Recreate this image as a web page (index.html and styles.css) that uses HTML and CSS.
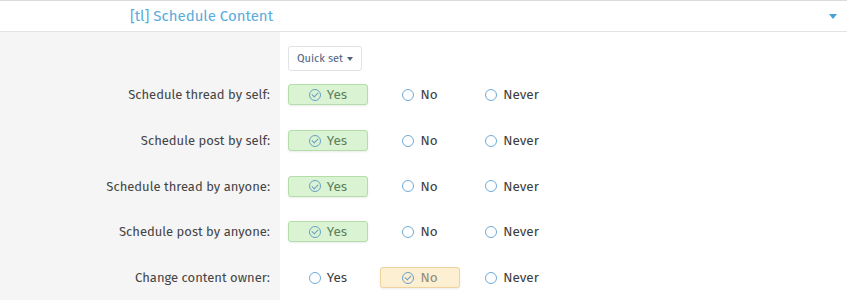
FILE: index.html
```html
<!DOCTYPE html>
<html lang="en">
<head>
    <meta charset="UTF-8">
    <title>Schedule Content permissions</title>
    <link rel="stylesheet" href="styles.css">
</head>
<body>
    <div class="block">
        <!-- Cabeçalho do grupo -->
        <div class="block-header">
            <span class="block-title">[tl] Schedule Content</span>
            <span class="block-caret"></span>
        </div>

        <div class="block-body">
            <div class="form-row">
                <div class="row-label"></div>
                <div class="row-input">
                    <button class="quick-set">Quick set <span class="mini-caret"></span></button>
                </div>
            </div>

            <div class="form-row">
                <div class="row-label">Schedule thread by self:</div>
                <div class="row-input choices">
                    <label class="choice allow"><span class="icon-check"></span>Yes</label>
                    <label class="choice"><span class="radio"></span>No</label>
                    <label class="choice"><span class="radio"></span>Never</label>
                </div>
            </div>

            <div class="form-row">
                <div class="row-label">Schedule post by self:</div>
                <div class="row-input choices">
                    <label class="choice allow"><span class="icon-check"></span>Yes</label>
                    <label class="choice"><span class="radio"></span>No</label>
                    <label class="choice"><span class="radio"></span>Never</label>
                </div>
            </div>

            <div class="form-row">
                <div class="row-label">Schedule thread by anyone:</div>
                <div class="row-input choices">
                    <label class="choice allow"><span class="icon-check"></span>Yes</label>
                    <label class="choice"><span class="radio"></span>No</label>
                    <label class="choice"><span class="radio"></span>Never</label>
                </div>
            </div>

            <div class="form-row">
                <div class="row-label">Schedule post by anyone:</div>
                <div class="row-input choices">
                    <label class="choice allow"><span class="icon-check"></span>Yes</label>
                    <label class="choice"><span class="radio"></span>No</label>
                    <label class="choice"><span class="radio"></span>Never</label>
                </div>
            </div>

            <div class="form-row">
                <div class="row-label">Change content owner:</div>
                <div class="row-input choices">
                    <label class="choice"><span class="radio"></span>Yes</label>
                    <label class="choice unset"><span class="icon-check"></span>No</label>
                    <label class="choice"><span class="radio"></span>Never</label>
                </div>
            </div>
        </div>
    </div>
</body>
</html>
```

FILE: styles.css
```css
body {
    margin: 0;
    font-family: "Fira Sans", "Noto Sans", sans-serif;
    font-size: 13px;
    color: #444;
    background-color: #fff;
}

.block {
    border-top: 1px solid #dcdcdc;
}

.block-header {
    display: flex;
    align-items: center;
    height: 30px;
    padding: 0 10px 0 130px;
    border-bottom: 1px solid #e3e3e3;
}

.block-title {
    flex-grow: 1;
    font-size: 15px;
    color: #5aacdb;
}

.block-caret {
    width: 0;
    height: 0;
    border-left: 4px solid transparent;
    border-right: 4px solid transparent;
    border-top: 5px solid #47a0d6;
}

.block-body {
    background: linear-gradient(to right, #f5f5f5 280px, #fff 280px);
    padding-top: 14px;
}

.form-row {
    display: flex;
    align-items: center;
    min-height: 45.7px;
}

.form-row:first-child {
    min-height: 0;
    padding-bottom: 1px;
}

.row-label {
    width: 280px;
    text-align: right;
    padding-right: 10px;
    box-sizing: border-box;
    margin-right: 8px;
}

.quick-set {
    font-family: inherit;
    font-size: 11px;
    color: #4c6180;
    background-color: #fff;
    border: 1px solid #dfe3e8;
    border-radius: 3px;
    padding: 0 8px;
    height: 25px;
    display: flex;
    align-items: center;
    gap: 4px;
}

.mini-caret {
    display: inline-block;
    border-left: 3.5px solid transparent;
    border-right: 3.5px solid transparent;
    border-top: 4px solid #4c6180;
}

.choices {
    display: flex;
    gap: 12px;
}

.choice {
    width: 80px;
    height: 21px;
    box-sizing: border-box;
    display: flex;
    align-items: center;
    justify-content: center;
    gap: 6px;
    border: 1px solid transparent;
    border-radius: 3px;
    font-size: 13.5px;
    color: #3d3d3d;
}

.choice.allow {
    background-color: #daf3d3;
    border-color: #b3dea9;
    color: #5c7f5c;
    box-shadow: 0 1px 2px rgba(0, 0, 0, 0.08);
}

.choice.unset {
    background-color: #fdefd1;
    border-color: #efd29d;
    color: #8f8a7a;
    box-shadow: 0 1px 2px rgba(0, 0, 0, 0.08);
}

.radio {
    width: 12px;
    height: 12px;
    border: 1.5px solid #6eaad8;
    border-radius: 50%;
    box-sizing: border-box;
    background-color: #fff;
}

.icon-check {
    position: relative;
    width: 12px;
    height: 12px;
    border: 1.3px solid #6a9fc7;
    border-radius: 50%;
    box-sizing: border-box;
}

.icon-check::after {
    content: "";
    position: absolute;
    left: 3px;
    top: 1.5px;
    width: 3px;
    height: 5px;
    border-right: 1.3px solid #6a9fc7;
    border-bottom: 1.3px solid #6a9fc7;
    transform: rotate(45deg);
}
```
